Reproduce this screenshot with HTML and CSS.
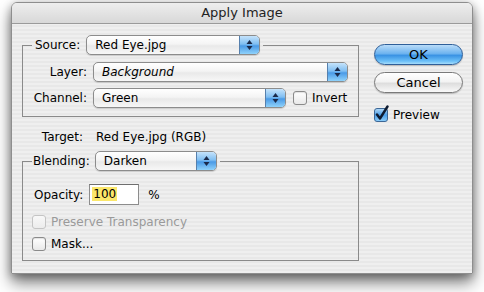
FILE: index.html
```html
<!DOCTYPE html>
<html lang="en">
<head>
    <meta charset="UTF-8">
    <meta name="viewport" content="width=device-width, initial-scale=1.0">
    <title>Apply Image</title>
    <link rel="stylesheet" href="styles.css">
</head>
<body>
    <div class="window">
        <div class="titlebar">Apply Image</div>
        <div class="content">
            <div class="main">
                <fieldset class="group group-source">
                    <legend>
                        <span class="legend-label">Source:</span>
                        <div class="popup popup-source">
                            <span class="popup-text">Red Eye.jpg</span>
                            <span class="popup-arrows">
                                <svg width="9" height="12" viewBox="0 0 9 12"><path d="M4.5 1 L7.5 5 L1.5 5 Z M4.5 11 L7.5 7 L1.5 7 Z" fill="#1b2a4a"/></svg>
                            </span>
                        </div>
                    </legend>
                    <div class="row">
                        <span class="row-label">Layer:</span>
                        <div class="popup popup-layer">
                            <span class="popup-text italic">Background</span>
                            <span class="popup-arrows">
                                <svg width="9" height="12" viewBox="0 0 9 12"><path d="M4.5 1 L7.5 5 L1.5 5 Z M4.5 11 L7.5 7 L1.5 7 Z" fill="#1b2a4a"/></svg>
                            </span>
                        </div>
                    </div>
                    <div class="row">
                        <span class="row-label">Channel:</span>
                        <div class="popup popup-channel">
                            <span class="popup-text">Green</span>
                            <span class="popup-arrows">
                                <svg width="9" height="12" viewBox="0 0 9 12"><path d="M4.5 1 L7.5 5 L1.5 5 Z M4.5 11 L7.5 7 L1.5 7 Z" fill="#1b2a4a"/></svg>
                            </span>
                        </div>
                        <label class="check check-invert"><span class="box"></span>Invert</label>
                    </div>
                </fieldset>

                <div class="target">
                    <span class="target-label">Target:</span>
                    <span>Red Eye.jpg (RGB)</span>
                </div>

                <fieldset class="group group-blending">
                    <legend>
                        <span class="legend-label">Blending:</span>
                        <div class="popup popup-blending">
                            <span class="popup-text">Darken</span>
                            <span class="popup-arrows">
                                <svg width="9" height="12" viewBox="0 0 9 12"><path d="M4.5 1 L7.5 5 L1.5 5 Z M4.5 11 L7.5 7 L1.5 7 Z" fill="#1b2a4a"/></svg>
                            </span>
                        </div>
                    </legend>
                    <div class="opacity-row">
                        <span>Opacity:</span>
                        <span class="field"><span class="selected">100</span></span>
                        <span class="unit">%</span>
                    </div>
                    <label class="check disabled"><span class="box"></span>Preserve Transparency</label>
                    <label class="check"><span class="box"></span>Mask...</label>
                </fieldset>
            </div>

            <div class="side">
                <button class="btn btn-default">OK</button>
                <button class="btn">Cancel</button>
                <label class="check check-preview">
                    <svg class="box-checked" width="16" height="17" viewBox="0 0 16 17">
                        <defs>
                            <linearGradient id="blue" x1="0" y1="0" x2="0" y2="1">
                                <stop offset="0" stop-color="#b7dcf8"/>
                                <stop offset="0.5" stop-color="#4a9de8"/>
                                <stop offset="1" stop-color="#8fd0fb"/>
                            </linearGradient>
                        </defs>
                        <rect x="0.5" y="3.5" width="13" height="13" rx="2.5" fill="url(#blue)" stroke="#3d6796"/>
                        <path d="M3 9.5 L6 13.5 L13.5 1.5" fill="none" stroke="#0d1a30" stroke-width="2.4" stroke-linecap="round" stroke-linejoin="round"/>
                    </svg>
                    Preview
                </label>
            </div>
        </div>
    </div>
</body>
</html>
```

FILE: styles.css
```css
body {
    margin: 0;
    width: 484px;
    height: 292px;
    overflow: hidden;
    background-color: #fff;
    font-family: "Lucida Grande", "DejaVu Sans", sans-serif;
    font-size: 12px;
    color: #000;
}

.window {
    box-sizing: border-box;
    margin: 2px 0 0 11px;
    width: 462px;
    height: 272px;
    border: 1px solid #8e8e8e;
    border-radius: 6px 6px 0 0;
    background: repeating-linear-gradient(to bottom, #efefef 0, #efefef 2px, #e8e8e8 2px, #e8e8e8 4px);
    box-shadow: 0 9px 16px rgba(0, 0, 0, 0.5), 0 2px 9px rgba(0, 0, 0, 0.3);
}

.titlebar {
    height: 20px;
    border-bottom: 1px solid #9a9a9a;
    border-radius: 5px 5px 0 0;
    background: linear-gradient(to bottom, #eeeeee, #d8d8d8);
    text-align: center;
    line-height: 20px;
    font-size: 13px;
    color: #222;
}

.content {
    display: flex;
    padding: 11px 0 0 10px;
}

.main {
    width: 337px;
}

.group {
    margin: 0;
    padding: 7px 8px 8px 9px;
    border: 1px solid #8a8a8a;
    min-inline-size: 0;
}

.group legend {
    display: flex;
    align-items: center;
    padding: 0 3px;
}

.legend-label {
    margin-right: 6px;
}

.group-blending legend {
    padding-left: 1px;
}

.group-blending .legend-label {
    margin-right: 5px;
}

.row {
    display: flex;
    align-items: center;
    height: 20px;
}

.row + .row {
    margin-top: 6px;
}

.row-label {
    width: 55px;
    margin-right: 6px;
    text-align: right;
}

/* aqua popup menu */
.popup {
    box-sizing: border-box;
    display: flex;
    height: 20px;
    border: 1px solid #8c8c8c;
    border-radius: 5px;
    background: linear-gradient(to bottom, #ffffff 0%, #f4f4f4 45%, #e9e9e9 55%, #f7f7f7 100%);
    box-shadow: 0 1px 1px rgba(0, 0, 0, 0.15);
}

.popup-text {
    flex: 1;
    padding-left: 8px;
    line-height: 18px;
    white-space: nowrap;
}

.italic {
    font-style: italic;
}

.popup-arrows {
    width: 19px;
    display: flex;
    align-items: center;
    justify-content: center;
    border-left: 1px solid #5680ad;
    border-radius: 0 4px 4px 0;
    background: linear-gradient(to bottom, #c5e3fb 0%, #7fbef2 45%, #4a9ae6 55%, #8fd2fb 100%);
}

.popup-source {
    width: 174px;
}

.popup-layer {
    width: 255px;
}

.popup-channel {
    width: 193px;
}

.popup-blending {
    width: 122px;
}

/* checkboxes */
.check {
    display: flex;
    align-items: center;
    height: 22px;
}

.box {
    box-sizing: border-box;
    width: 14px;
    height: 14px;
    margin-right: 5px;
    border: 1px solid #8a8a8a;
    border-radius: 3px;
    background: linear-gradient(to bottom, #ffffff, #e9e9e9);
    box-shadow: inset 0 1px 1px rgba(0, 0, 0, 0.12);
}

.check-invert {
    margin-left: 7px;
}

.check.disabled {
    color: #9a9a9a;
}

.check.disabled .box {
    border-color: #c4c4c4;
    background: linear-gradient(to bottom, #f8f8f8, #ececec);
    box-shadow: none;
}

.target {
    display: flex;
    margin: 12px 0 6px;
    height: 16px;
    line-height: 16px;
}

.target-label {
    width: 61px;
    margin-right: 13px;
    text-align: right;
}

.group-blending {
    padding-top: 13px;
    padding-bottom: 5px;
}

.opacity-row {
    display: flex;
    align-items: center;
    height: 21px;
    margin-left: 2px;
    margin-bottom: 6px;
}

.field {
    box-sizing: border-box;
    width: 50px;
    height: 21px;
    margin-left: 6px;
    padding: 2px 2px;
    border: 1px solid #8c8c8c;
    border-top-color: #6e6e6e;
    background-color: #fff;
    line-height: 15px;
}

.selected {
    background-color: #fbe76a;
    padding: 0 1px;
}

.unit {
    margin-left: 9px;
}

/* right column */
.side {
    display: flex;
    flex-direction: column;
    margin-left: 15px;
    padding-top: 9px;
    width: 89px;
}

.btn {
    box-sizing: border-box;
    height: 21px;
    padding: 0;
    border: 1px solid #7a7a7a;
    border-radius: 11px;
    font-family: inherit;
    font-size: 13px;
    color: #000;
    background: linear-gradient(to bottom, #ffffff 0%, #f3f3f3 45%, #dedede 55%, #f9f9f9 100%);
    box-shadow: 0 1px 1px rgba(0, 0, 0, 0.2);
}

.btn + .btn {
    margin-top: 7px;
}

.btn-default {
    border-color: #2f5f99;
    background: linear-gradient(to bottom, #b9dcf9 0%, #6db3ef 45%, #3a93e4 55%, #6cc0f8 85%, #a5dcfb 100%);
}

.check-preview {
    margin-top: 13px;
    height: 18px;
}

.box-checked {
    margin: -3px 3px 0 0;
}
```
